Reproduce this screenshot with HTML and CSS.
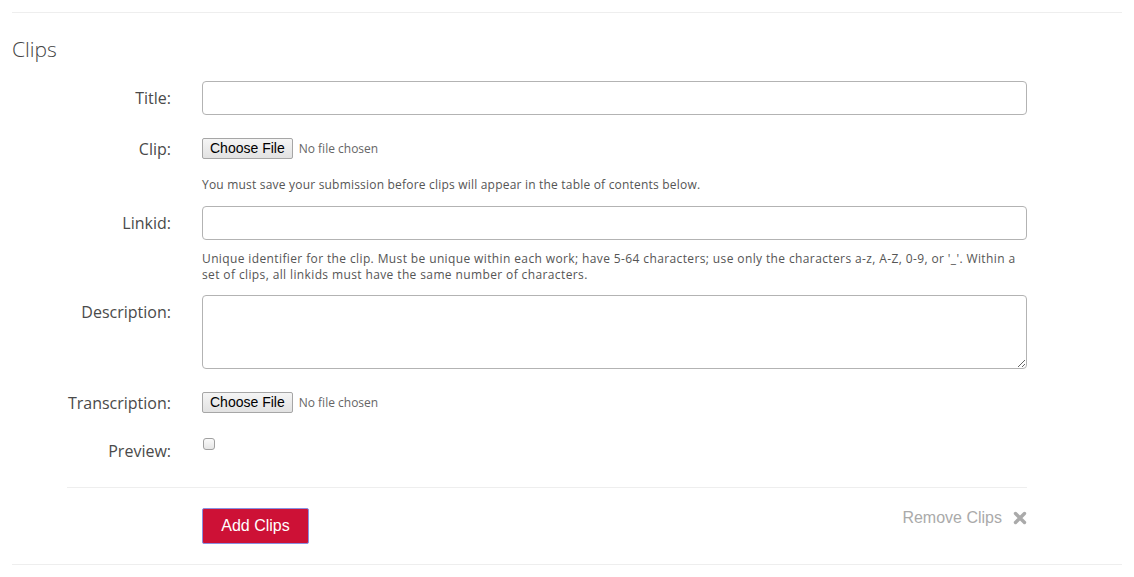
FILE: index.html
```html
<!DOCTYPE html>
<html lang="en">
<head>
    <meta charset="UTF-8">
    <meta name="viewport" content="width=device-width, initial-scale=1.0">
    <title>Clips</title>
    <link rel="stylesheet" href="styles.css">
</head>
<body>
    <div class="section">
        <h2>Clips</h2>
        <form class="clip-form">
            <div class="row row-title">
                <label for="title">Title:</label>
                <input type="text" id="title" class="text-input">
            </div>

            <div class="row row-file">
                <label>Clip:</label>
                <div class="file">
                    <span class="file-btn">Choose File</span>
                    <span class="file-name">No file chosen</span>
                </div>
            </div>
            <div class="row row-help">
                <span></span>
                <p class="help">You must save your submission before clips will appear in the table of contents below.</p>
            </div>

            <div class="row row-linkid">
                <label for="linkid">Linkid:</label>
                <div>
                    <input type="text" id="linkid" class="text-input">
                    <p class="help help-two">Unique identifier for the clip. Must be unique within each work; have 5-64 characters; use only the characters a-z, A-Z, 0-9, or '_'. Within a set of clips, all linkids must have the same number of characters.</p>
                </div>
            </div>

            <div class="row row-desc">
                <label for="description">Description:</label>
                <textarea id="description"></textarea>
            </div>

            <div class="row row-file row-trans">
                <label>Transcription:</label>
                <div class="file">
                    <span class="file-btn">Choose File</span>
                    <span class="file-name">No file chosen</span>
                </div>
            </div>

            <div class="row row-preview">
                <label for="preview">Preview:</label>
                <div><span class="checkbox"></span></div>
            </div>

            <div class="actions">
                <button type="button" class="add-btn">Add Clips</button>
                <a class="remove">Remove Clips
                    <svg width="14" height="14" viewBox="0 0 14 14"><path d="M2.5 2.5 L11.5 11.5 M11.5 2.5 L2.5 11.5" stroke="#aaa" stroke-width="3.4" stroke-linecap="round"/></svg>
                </a>
            </div>
        </form>
    </div>
</body>
</html>
```

FILE: styles.css
```css
body {
    margin: 0;
    font-family: "Open Sans", Lato, sans-serif;
    color: #444;
    background-color: #fff;
}
.section {
    margin: 12px 12px 0 12px;
    border-top: 1px solid #eee;
    border-bottom: 1px solid #eee;
}
h2 {
    margin: 22px 0 0 0;
    font-size: 21px;
    font-weight: 300;
    color: #444;
    line-height: 28px;
}
.clip-form {
    margin-top: 18px;
}
.row {
    display: grid;
    grid-template-columns: 159px 825px;
    column-gap: 31px;
}
.row label {
    text-align: right;
    font-size: 16px;
    color: #4a4a4a;
}
.row-title label,
.row-linkid label {
    line-height: 34px;
}
.text-input {
    display: block;
    box-sizing: border-box;
    width: 825px;
    height: 34px;
    margin: 0;
    border: 1px solid #b3b3b3;
    border-radius: 4px;
}
.row-file {
    margin-top: 23px;
    height: 20px;
    align-items: center;
}
.row-file label {
    line-height: 20px;
}
.file {
    display: flex;
    align-items: center;
    gap: 6px;
}
.file-btn {
    box-sizing: border-box;
    height: 21px;
    padding: 0 7px;
    border: 1px solid #a6a6a6;
    border-radius: 2px;
    background: linear-gradient(#f5f5f5, #e2e2e2);
    font-family: "Liberation Sans", Arial, sans-serif;
    font-size: 14px;
    line-height: 19px;
    color: #000;
}
.file-name {
    font-size: 12px;
    color: #666;
}
.help {
    margin: 0;
    font-size: 12px;
    line-height: 16px;
    color: #555;
    letter-spacing: 0.2px;
}
.row-help {
    margin-top: 19px;
}
.row-linkid {
    margin-top: 13px;
}
.help-two {
    margin-top: 11px;
    padding-right: 4px;
    letter-spacing: 0.38px;
}
.row-desc {
    margin-top: 12px;
}
.row-desc label {
    line-height: 34px;
}
textarea {
    box-sizing: border-box;
    width: 825px;
    height: 74px;
    margin: 0;
    border: 1px solid #b3b3b3;
    border-radius: 4px;
    display: block;
}
.row-trans {
    margin-top: 23px;
}
.row-preview {
    margin-top: 23px;
}
.row-preview label {
    line-height: 32px;
}
.checkbox {
    display: block;
    box-sizing: border-box;
    width: 12px;
    height: 12px;
    margin: 3px 0 0 1px;
    border: 1px solid #a0a0a0;
    border-radius: 3px;
    background: linear-gradient(#fafafa, #e6e6e6);
}
.actions {
    margin: 20px 55px 0 55px;
    border-top: 1px solid #eee;
    padding: 20px 0 20px 135px;
    display: flex;
    align-items: flex-start;
    justify-content: space-between;
    width: 825px;
}
.add-btn {
    width: 107px;
    height: 36px;
    background-color: #cd1136;
    border: 1px solid #8a8fe0;
    border-radius: 2px;
    color: #fff;
    font-family: "Liberation Sans", Arial, sans-serif;
    font-size: 16px;
    cursor: pointer;
}
.remove {
    margin-top: 1px;
    display: flex;
    align-items: center;
    gap: 11px;
    font-family: "Liberation Sans", Arial, sans-serif;
    font-size: 16px;
    color: #aaa;
    line-height: 18px;
}
```
